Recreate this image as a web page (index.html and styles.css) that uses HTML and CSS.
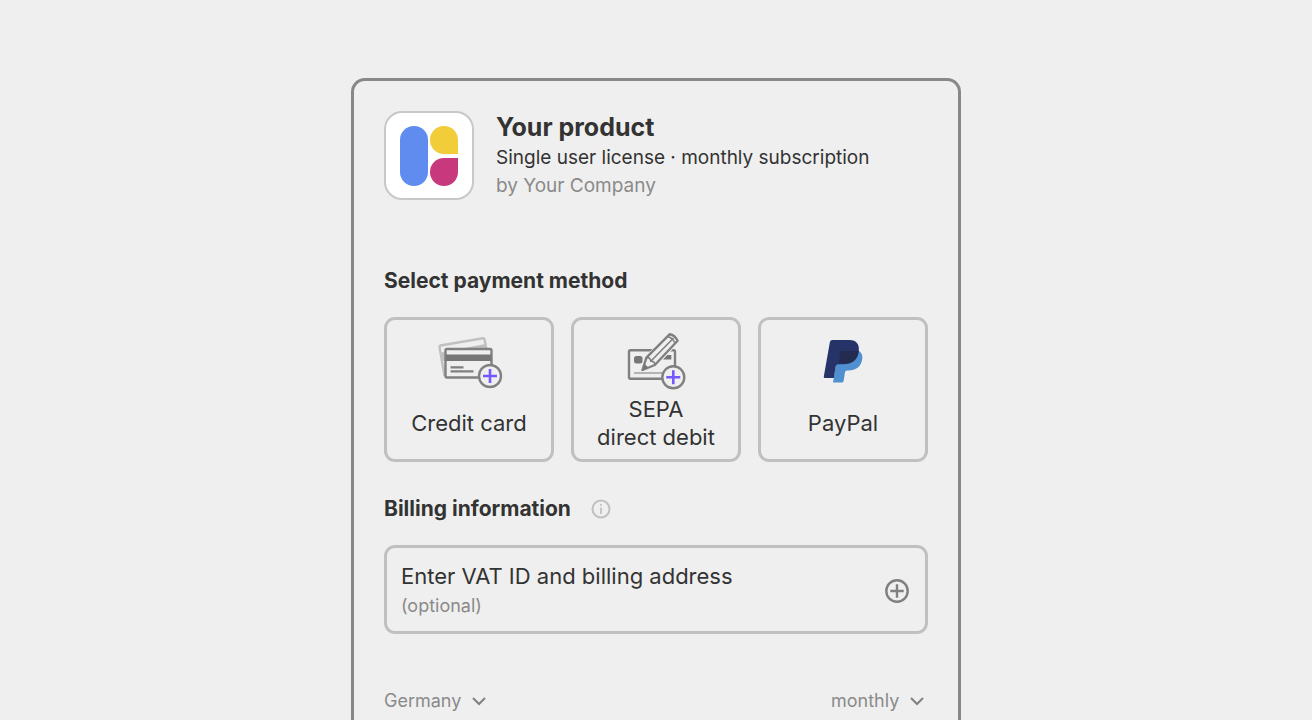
FILE: index.html
```html
<!DOCTYPE html>
<html lang="en">
  <head>
    <meta charset="UTF-8" />
    <meta name="viewport" content="width=device-width, initial-scale=1.0" />
    <title>Checkout</title>
    <link rel="stylesheet" href="styles.css">
  </head>
  <body>
    <main class="checkout">
      <header class="product">
        <div class="product-logo">
          <svg viewBox="0 0 58 60" width="58" height="60" aria-hidden="true">
            <rect width="28" height="60" rx="14" fill="#5f8cee" />
            <path d="M58 28H44A14 14 0 1 1 58 14Z" fill="#f1cd3a" />
            <path d="M58 32H44A14 14 0 1 0 58 46Z" fill="#c7387d" />
          </svg>
        </div>
        <div>
          <h1 class="product-name">Your product</h1>
          <p class="product-line">Single user license · monthly subscription</p>
          <p class="product-line muted">by Your Company</p>
        </div>
      </header>

      <section class="payment">
        <h2 class="heading">Select payment method</h2>
        <div class="methods">
          <button type="button" class="method">
            <svg class="method-icon" viewBox="0 0 75 64" aria-hidden="true">
              <path d="M12.5 46L7.5 17Q7.3 15.8 8.5 15.5L51 8.2Q52.3 8 52.5 9.2L54.4 19" fill="none" stroke="#c0c0c0" stroke-width="2.4" />
              <path d="M8.5 22.5L53.3 14L54.5 19H13V31H10.3Z" fill="#c0c0c0" />
              <rect x="13.5" y="19" width="46" height="28.5" rx="1.5" fill="#efefef" stroke="#808080" stroke-width="2.4" />
              <path d="M13.5 24.5h46v6.5h-46z" fill="#777" />
              <path d="M18.5 37.3h13M18.5 41.3h23" stroke="#808080" stroke-width="2.2" />
              <circle cx="58" cy="46" r="11" fill="#efefef" stroke="#808080" stroke-width="2.4" />
              <path d="M51 46h14M58 39v14" stroke="#7559ff" stroke-width="2.6" />
            </svg>
            <span class="method-label">Credit card</span>
          </button>
          <button type="button" class="method">
            <svg class="method-icon" viewBox="0 0 75 64" aria-hidden="true">
              <rect x="10" y="20.3" width="46" height="28.5" rx="1.5" fill="#efefef" stroke="#808080" stroke-width="2.4" />
              <rect x="15" y="26" width="8.5" height="7.4" rx="2.5" fill="#777" />
              <path d="M44 25h8.3v4.6H39z" fill="#777" />
              <path d="M15 43h30" stroke="#a5a5a5" stroke-width="1.6" />
              <path d="M26.2 28L50.6 3.5L59.5 11L36.5 36" fill="none" stroke="#efefef" stroke-width="2.4" />
              <path d="M23.5 40L27.4 27.6L50.8 4.2Q55.8 5 58.6 10.8L35.8 35Z" fill="#efefef" stroke="#808080" stroke-width="2.4" stroke-linejoin="round" />
              <path d="M27.4 27.6Q31.6 27.3 31.8 31.2Q36 31 35.8 35M31.8 31.2L54.6 8M48.5 6.5Q54 8 56 13.2" fill="none" stroke="#808080" stroke-width="1.6" />
              <path d="M22.5 41L25 33.5L29.8 37.8Z" fill="#777" />
              <circle cx="54.3" cy="47.3" r="11" fill="#efefef" stroke="#808080" stroke-width="2.4" />
              <path d="M47.3 47.3h14M54.3 40.3v14" stroke="#7559ff" stroke-width="2.6" />
            </svg>
            <span class="method-label">SEPA<br>direct debit</span>
          </button>
          <button type="button" class="method">
            <svg class="method-icon" viewBox="0 0 75 64" aria-hidden="true">
              <path d="M52.5 20.5Q57 23.5 56.3 28.5C55.3 37 49.8 40.4 42.5 40.4H41Q39.3 40.4 39 42L37.6 51Q37.4 52.4 36.2 52.4H27L30.5 31.5Z" fill="#5090d0" />
              <path d="M26.5 10H43.5C50.5 10 53.8 14.5 52.7 21.5C51.4 30.4 45.9 34.2 37.5 34.2H32Q30.1 34.2 29.8 36L27.8 48H19Q17.6 48 17.8 46.4L23.9 12Q24.3 10 26.5 10Z" fill="#263369" />
              <path d="M34.5 21H52.7C51.4 30.4 45.9 33.6 37.5 33.6H32.8Z" fill="#242b50" />
            </svg>
            <span class="method-label">PayPal</span>
          </button>
        </div>
      </section>

      <section class="billing">
        <div class="billing-title">
          <h2 class="heading">Billing information</h2>
          <button type="button" class="info" aria-label="About billing information">
            <svg viewBox="0 0 20 20" width="20" height="20" aria-hidden="true">
              <circle cx="10" cy="10" r="8.5" fill="none" stroke="#c0c0c0" stroke-width="2" />
              <path d="M10 8.5V15M10 5v1.8" stroke="#c0c0c0" stroke-width="1.8" />
            </svg>
          </button>
        </div>
        <button type="button" class="address">
          <span>
            <span class="address-main">Enter VAT ID and billing address</span>
            <span class="address-note">(optional)</span>
          </span>
          <svg viewBox="0 0 24 24" width="24" height="24" aria-hidden="true">
            <circle cx="12" cy="12" r="10.7" fill="none" stroke="#808080" stroke-width="2.4" />
            <path d="M5.3 12h13.4M12 5.3v13.4" stroke="#808080" stroke-width="2.4" />
          </svg>
        </button>
      </section>

      <div class="preferences">
        <div class="picker">
          <select aria-label="Country">
            <option>Germany</option>
          </select>
          <svg class="chevron" viewBox="0 0 14 10" aria-hidden="true">
            <path d="M1 2L7 8L13 2" />
          </svg>
        </div>
        <div class="picker">
          <select aria-label="Billing period">
            <option>monthly</option>
          </select>
          <svg class="chevron" viewBox="0 0 14 10" aria-hidden="true">
            <path d="M1 2L7 8L13 2" />
          </svg>
        </div>
      </div>
    </main>
  </body>
</html>
```

FILE: styles.css
```css
* {
  box-sizing: border-box;
}
body {
  margin: 0;
  min-height: 100vh;
  padding-top: 78px;
  display: flex;
  justify-content: center;
  background: #efefef;
  color: #333;
  font-family: Inter, "Liberation Sans", sans-serif;
}
h1,
h2,
p {
  margin: 0;
}
button,
select {
  padding: 0;
  border: 0;
  background: none;
  color: inherit;
  font: inherit;
  cursor: pointer;
}
/* The panel runs on to the bottom of the page */
.checkout {
  width: 100%;
  max-width: 610px;
  padding: 30px 30px 0;
  border: 3px solid #888;
  border-bottom: 0;
  border-radius: 14px 14px 0 0;
}
.product {
  display: flex;
  gap: 22px;
  margin-bottom: 67px;
}
.product-logo {
  display: grid;
  place-items: center;
  flex: none;
  width: 90px;
  height: 89px;
  border: 2px solid #c8c8c8;
  border-radius: 18px;
  background: #fff;
}
.product-name {
  font-size: 25px;
  line-height: 33px;
}
.product-line {
  font-size: 19px;
  line-height: 28px;
}
.muted {
  color: #8a8a8a;
}
.heading {
  font-size: 21px;
  line-height: 28px;
}
.methods {
  display: grid;
  grid-template-columns: repeat(3, 1fr);
  gap: 17px;
  margin: 22px 0 33px;
}
.method,
.address {
  border: 3px solid #c0c0c0;
  border-radius: 11px;
}
.method {
  display: flex;
  flex-direction: column;
  align-items: center;
  padding: 10px 0 7px;
}
.method-icon {
  width: 75px;
  height: 64px;
}
.method-label {
  display: grid;
  align-content: center;
  height: 58px;
  font-size: 22px;
  line-height: 28px;
}
.billing-title {
  display: flex;
  align-items: center;
  gap: 20px;
  margin-bottom: 22px;
}
.info svg {
  display: block;
}
.address {
  display: flex;
  align-items: center;
  justify-content: space-between;
  width: 100%;
  padding: 13px 16px 10px 14px;
  text-align: left;
}
.address-main,
.address-note {
  display: block;
  line-height: 30px;
}
.address-main {
  font-size: 22px;
}
.address-note {
  color: #8a8a8a;
  font-size: 18px;
}
.preferences {
  display: flex;
  justify-content: space-between;
  margin-top: 53px;
  padding-right: 4px;
  color: #8a8a8a;
  font-size: 18px;
  line-height: 28px;
}
.picker {
  position: relative;
}
.picker select {
  appearance: none;
  padding-right: 24px;
}
/* Drawn over the select so that the whole field stays clickable */
.chevron {
  position: absolute;
  top: 9px;
  right: 0;
  width: 14px;
  height: 10px;
  fill: none;
  stroke: #808080;
  stroke-width: 2;
  pointer-events: none;
}
```
